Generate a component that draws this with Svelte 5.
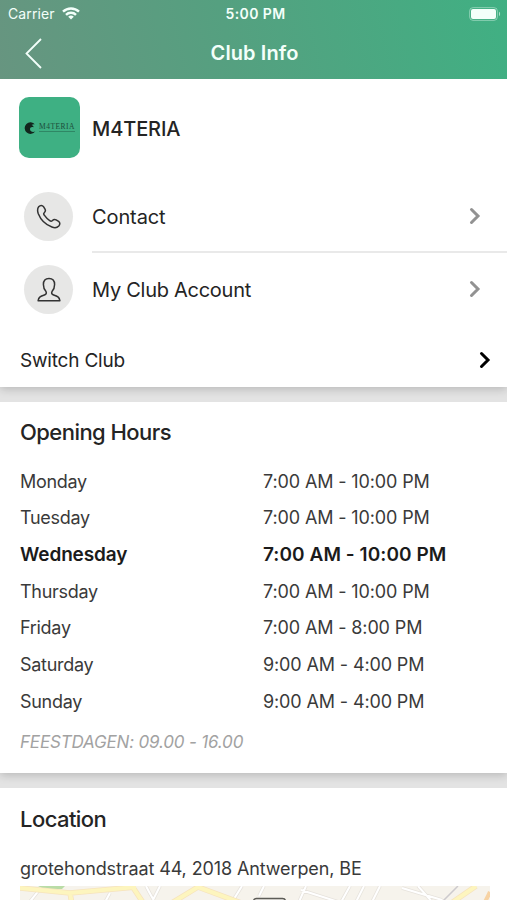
<script lang="ts">
  interface DayHours {
    day: string;
    hours: string;
    today?: boolean;
  }

  const openingHours: DayHours[] = [
    { day: "Monday", hours: "7:00 AM - 10:00 PM" },
    { day: "Tuesday", hours: "7:00 AM - 10:00 PM" },
    { day: "Wednesday", hours: "7:00 AM - 10:00 PM", today: true },
    { day: "Thursday", hours: "7:00 AM - 10:00 PM" },
    { day: "Friday", hours: "7:00 AM - 8:00 PM" },
    { day: "Saturday", hours: "9:00 AM - 4:00 PM" },
    { day: "Sunday", hours: "9:00 AM - 4:00 PM" },
  ];
</script>

{#snippet chevron()}
  <svg class="chevron" width="12" height="18" viewBox="0 0 12 18" fill="none" stroke="currentColor" stroke-width="3" stroke-linecap="round" stroke-linejoin="miter">
    <path d="M2.500 2.500L9 9l-6.500 6.500" />
  </svg>
{/snippet}

<div class="screen">
  <header class="header">
    <div class="status-bar">
      <div class="carrier">
        <span>Carrier</span>
        <svg width="18" height="13" viewBox="0 0 18 13" fill="none" stroke="currentColor" stroke-width="2.400">
          <path d="M1 4.700a11.500 11.500 0 0 1 16 0" />
          <path d="M4 7.900a7 7 0 0 1 10 0" />
          <path d="M9 12.500L6.200 9.800a4 4 0 0 1 5.600 0z" fill="currentColor" stroke="none" />
        </svg>
      </div>
      <span class="time">5:00 PM</span>
      <svg class="battery" width="32" height="14" viewBox="0 0 32 14" fill="none">
        <rect x="0.600" y="0.600" width="27.800" height="12.800" rx="3.500" stroke="currentColor" stroke-opacity="0.4" />
        <rect x="2" y="2" width="25" height="10" rx="2" fill="currentColor" />
        <path d="M30 4.800c1.500.6 1.500 3.800 0 4.400z" fill="currentColor" fill-opacity="0.6" />
      </svg>
    </div>
    <div class="nav-bar">
      <button class="back" aria-label="Back">
        <svg width="18" height="32" viewBox="0 0 18 32" fill="none" stroke="currentColor" stroke-width="1.800">
          <path d="M16 2L1.500 16.500 16 31" />
        </svg>
      </button>
      <h1>Club Info</h1>
      <span></span>
    </div>
  </header>

  <section class="club">
    <div class="club-head">
      <div class="logo">
        <svg width="12" height="12" viewBox="0 0 12 12">
          <path d="M11 2.500A5.800 5.800 0 1 0 11.300 9.300C9.500 10.600 6.200 10 6 7.300 5.900 5.300 8 4.300 9.500 5.300 9.700 4 8.600 3.200 7.500 3 8.800 2.200 10 2.100 11 2.500z" fill="#12251d" />
        </svg>
        <div class="wordmark">
          <span class="brand">M4TERIA</span>
          <span class="rule"></span>
        </div>
      </div>
      <span class="club-name">M4TERIA</span>
    </div>

    <a class="link" href="#contact">
      <span class="bubble">
        <svg width="26" height="26" viewBox="0 0 26 26" fill="none" stroke="currentColor" stroke-width="1.500" stroke-linejoin="round">
          <path d="M2.700 2.700C4.200.9 6.400 1 7.500 2.700l1.500 2.500c.9 1.600.3 2.600-.7 3.500-.8.700-.7 1.600 0 2.500 1.500 2.200 3.200 3.900 5.400 5.400.9.700 1.800.8 2.500.1 1.200-1.200 2.400-1.700 3.900-.8l2.500 1.500c1.600 1.100 1.600 3 .2 4.600-1.600 1.700-4.100 2.200-6.900 1C9.600 20.800 4.800 16 2.300 9.800 1.400 7.200 1.300 4.500 2.700 2.700z" />
        </svg>
      </span>
      <span class="link-body divided">
        <span class="label">Contact</span>
        {@render chevron()}
      </span>
    </a>
    <a class="link account" href="#account">
      <span class="bubble">
        <svg width="26" height="26" viewBox="0 0 26 26" fill="none" stroke="currentColor" stroke-width="1.500" stroke-linejoin="round">
          <path d="M13 1.400c-3.700 0-5.600 2.500-5.600 6 0 3.400 1 5.400 2.600 7.200.8 1.500.2 2.700-1.600 3.400-3.500 1.200-5.900 2-6.300 5.800h21.800c-.4-3.800-2.800-4.600-6.300-5.800-1.800-.7-2.400-1.900-1.600-3.400 1.600-1.800 2.600-3.800 2.600-7.200 0-3.500-1.900-6-5.600-6z" />
        </svg>
      </span>
      <span class="link-body">
        <span class="label">My Club Account</span>
        {@render chevron()}
      </span>
    </a>

    <a class="switch" href="#switch">
      <span>Switch Club</span>
      {@render chevron()}
    </a>
  </section>

  <section class="hours">
    <h2>Opening Hours</h2>
    <dl>
      {#each openingHours as { day, hours, today } (day)}
        <div class="day" class:today>
          <dt>{day}</dt>
          <dd>{hours}</dd>
        </div>
      {/each}
    </dl>
    <p class="note">FEESTDAGEN: 09.00 - 16.00</p>
  </section>

  <section class="location">
    <h2>Location</h2>
    <p class="address">grotehondstraat 44, 2018 Antwerpen, BE</p>
    <svg class="map" width="470" height="60" viewBox="0 0 470 60" fill="none">
      <rect width="470" height="60" fill="#f6f3ec" />
      <path d="M18 0h27l-3 3H24z" fill="#b9dca6" />
      <!-- side streets: grey casing under white -->
      <g stroke="#e6e2dc" stroke-width="3.500">
        <path d="M126 0q4 8 10 18M140 0l-9 18M212 16l10-16M8 18L20 3M90 7l-6 11M244 0l-5 10M286 0l-8 18M281 4l44 14M330 0l-10 18M344 0l-9 18M360 0l-9 18M382 2l40 12M398 0l16 18" />
      </g>
      <g stroke="#fff" stroke-width="2">
        <path d="M126 0q4 8 10 18M140 0l-9 18M212 16l10-16M8 18L20 3M90 7l-6 11M244 0l-5 10M286 0l-8 18M281 4l44 14M330 0l-10 18M344 0l-9 18M360 0l-9 18M382 2l40 12M398 0l16 18" />
      </g>
      <g stroke="#f6e3bd" stroke-width="5.500">
        <path d="M0 2l50 5 66-6M50 7l2 11M112 0l12 18M150 18l28-17 46 17M430 18L456 0" />
      </g>
      <g stroke="#fdf5be" stroke-width="4">
        <path d="M0 2l50 5 66-6M50 7l2 11M112 0l12 18M150 18l28-17 46 17M430 18L456 0" />
      </g>
      <path d="M420 18L438 0" stroke="#cdcacd" stroke-width="1.500" />
      <path d="M464 18l6-12" stroke="#f7d3a4" stroke-width="4" />
      <rect x="233.500" y="12.500" width="32" height="30" rx="3" fill="#efede7" stroke="#5d5c57" stroke-width="1.500" />
    </svg>
  </section>
</div>

<style>
  :global(body) {
    margin: 0;
  }
  .screen {
    display: flex;
    flex-direction: column;
    gap: 15px;
    height: 900px;
    overflow: hidden;
    background: #e3e3e3;
    font-family: Inter, "Liberation Sans", sans-serif;
    color: #242424;
  }
  h1,
  h2,
  p,
  dl,
  dd {
    margin: 0;
  }
  a {
    color: inherit;
    text-decoration: none;
  }

  .header {
    flex: none;
    height: 79px;
    margin-bottom: -15px;
    background: linear-gradient(77deg, #679580 0%, #55a080 45%, #40b083 100%);
    color: #f3fffa;
  }
  .status-bar {
    display: grid;
    grid-template-columns: 1fr auto 1fr;
    align-items: center;
    height: 27px;
    padding: 0 6px 0 8px;
    font-size: 14px;
  }
  .carrier {
    display: flex;
    align-items: center;
    gap: 7px;
    letter-spacing: 0.1px;
  }
  .time {
    padding-left: 2px;
    font-weight: 600;
    letter-spacing: 0.4px;
  }
  .battery {
    justify-self: end;
  }
  .nav-bar {
    display: grid;
    grid-template-columns: 1fr auto 1fr;
    align-items: center;
    height: 51px;
  }
  .back {
    display: flex;
    justify-self: start;
    padding: 0 0 0 25px;
    border: 0;
    background: none;
    color: inherit;
  }
  h1 {
    padding-left: 2px;
    font-size: 20px;
    font-weight: 600;
    letter-spacing: 0.1px;
  }

  section {
    flex: none;
    box-sizing: border-box;
    background: #fff;
  }
  .club,
  .hours {
    box-shadow: 0 2px 9px rgba(0, 0, 0, 0.2);
    clip-path: inset(0 0 -15px 0);
  }

  .club {
    height: 308px;
    padding-top: 18px;
  }
  .club-head {
    display: flex;
    align-items: center;
    gap: 12px;
    height: 61px;
    margin-bottom: 22px;
    padding-left: 19px;
  }
  .logo {
    display: flex;
    align-items: center;
    justify-content: center;
    gap: 3px;
    width: 61px;
    height: 61px;
    border-radius: 10px;
    background: #3eb083;
  }
  .wordmark {
    display: flex;
    flex-direction: column;
    gap: 1px;
  }
  .brand {
    font: 7.500px/7px "Liberation Serif", serif;
    letter-spacing: 0.5px;
    color: #1c4d3a;
  }
  .rule {
    height: 1px;
    background: #2f8765;
  }
  .club-name {
    padding-top: 2px;
    font-size: 20px;
    font-weight: 500;
    letter-spacing: -0.1px;
  }

  .link {
    display: flex;
    align-items: center;
    gap: 19px;
    height: 73px;
    padding-left: 24px;
  }
  .bubble {
    display: flex;
    align-items: center;
    justify-content: center;
    width: 49px;
    height: 49px;
    border-radius: 50%;
    background: #e7e7e6;
    color: #333;
  }
  .link-body {
    display: flex;
    flex: 1;
    align-items: center;
    justify-content: space-between;
    box-sizing: border-box;
    height: 73px;
    padding-right: 26px;
    font-size: 20px;
    letter-spacing: -0.1px;
    border-bottom: 2px solid transparent;
  }
  .link-body.divided {
    border-color: #e9e9e9;
  }
  .label {
    padding-top: 2px;
  }
  .account .link-body {
    letter-spacing: -0.27px;
  }
  .link-body .chevron {
    color: #929292;
  }
  .switch {
    display: flex;
    align-items: center;
    justify-content: space-between;
    height: 54px;
    margin-top: 7px;
    padding: 0 16px 0 20px;
    font-size: 19px;
    letter-spacing: -0.2px;
  }
  .switch .chevron {
    color: #000;
  }

  h2 {
    font-size: 22px;
    font-weight: 500;
    line-height: 28px;
    letter-spacing: -0.55px;
  }
  .hours {
    height: 371px;
    padding: 16px 20px 0;
  }
  dl {
    margin-top: 17px;
  }
  .day {
    display: grid;
    grid-template-columns: 243px 1fr;
    align-items: center;
    height: 36.650px;
    font-size: 18px;
    color: #3a3a3a;
  }
  dt {
    letter-spacing: -0.3px;
  }
  dd {
    letter-spacing: -0.13px;
  }
  .day.today {
    font-weight: 600;
    font-size: 19px;
    color: #1b1b1b;
  }
  .today dt {
    letter-spacing: -0.13px;
  }
  .today dd {
    letter-spacing: 0.06px;
  }
  .note {
    margin-top: 12px;
    font-size: 17px;
    font-style: italic;
    line-height: 22px;
    letter-spacing: -0.17px;
    color: #a2a2a2;
  }

  .location {
    padding: 17px 18px 0 20px;
  }
  .address {
    margin-top: 22px;
    font-size: 18px;
    line-height: 27px;
    letter-spacing: -0.11px;
    color: #3a3a3a;
  }
  .map {
    display: block;
    margin-top: 4px;
  }
</style>
